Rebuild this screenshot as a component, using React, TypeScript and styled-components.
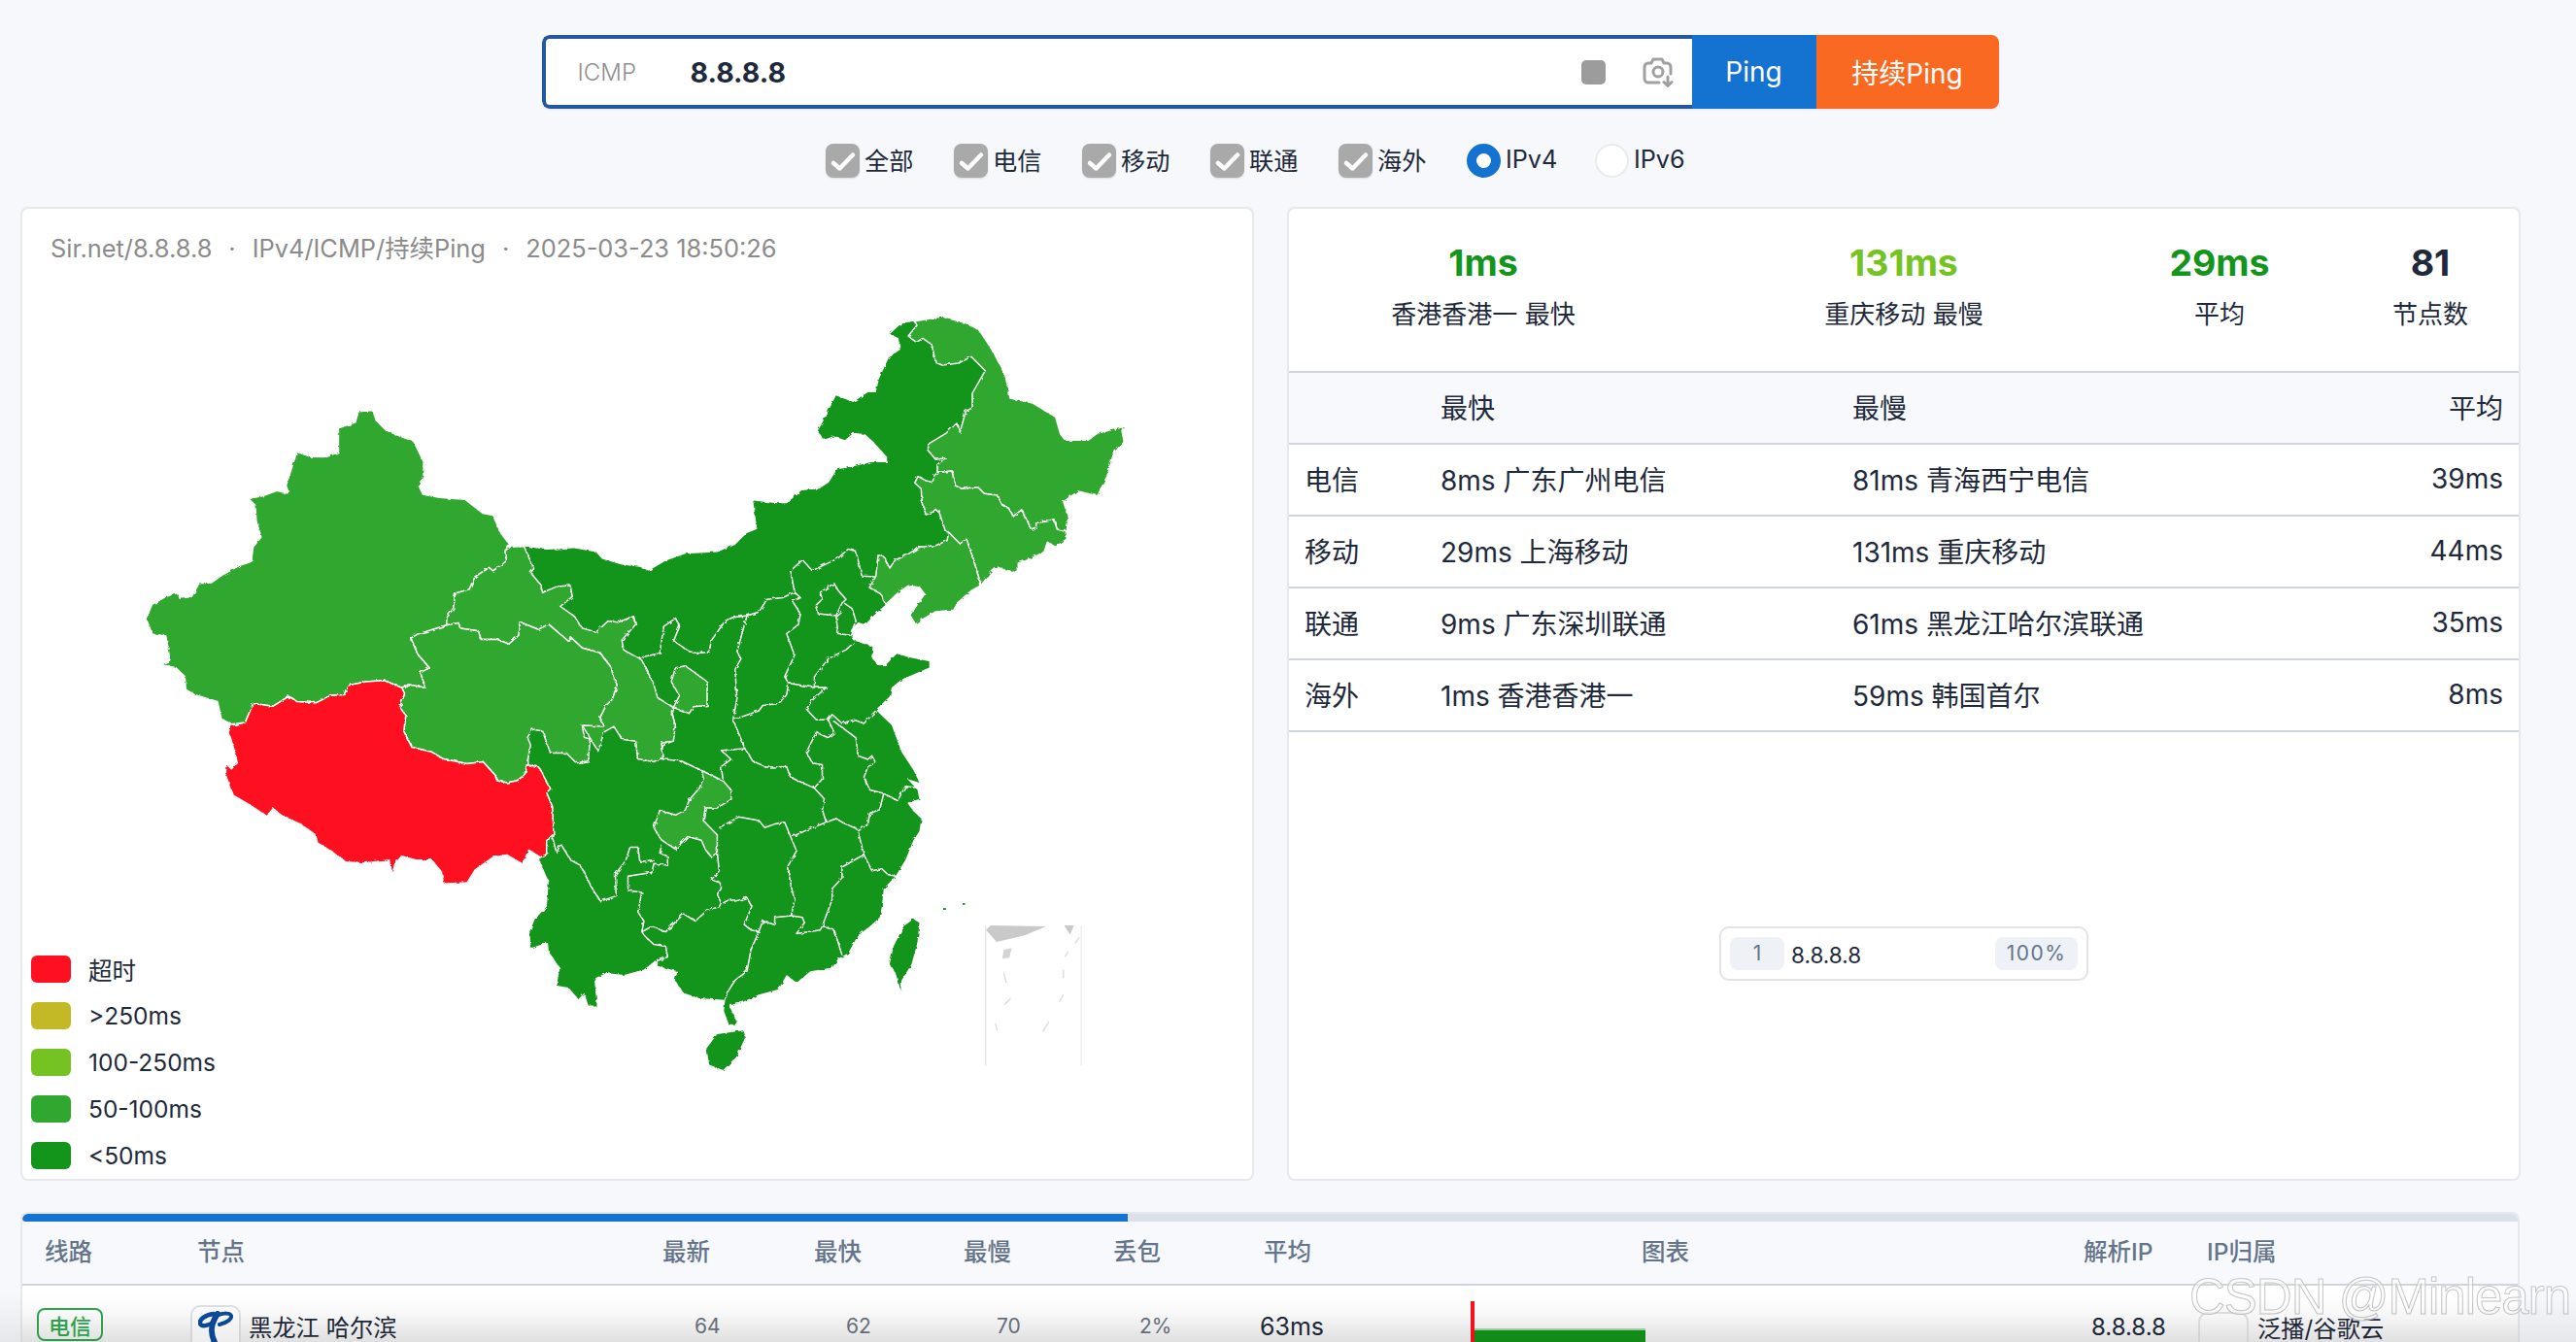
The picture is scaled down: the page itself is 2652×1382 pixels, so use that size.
import styled, { createGlobalStyle } from 'styled-components'

/*---> Map data, traced from the picture <---*/
const frames: Record<string, [number, number, number, number]> = {
  a: [0, 1.206, 200, 1.537],
  w: [130, 2.45, 300, 2.45],
  e: [520, 2.45, 560, 2.703],
  n: [800, 3, 300, 3],
}

const pts = (frame: string, list: number[]) => {
  const [ox, sx, oy, sy] = frames[frame]
  const out: string[] = []
  for (let i = 0; i < list.length; i += 2) {
    out.push(`${(ox + list[i] / sx).toFixed(1)},${(oy + list[i + 1] / sy).toFixed(1)}`)
  }
  return out.join(' ')
}

const mainland = [
  pts('w', [1003,643,1060,652,1130,648,1185,658,1200,675,1250,690,1295,695,1318,705,1360,680,1410,662,1490,658,1535,640,1565,610]),
  pts('a', [940,530,935,485]),
  pts('n', [0,655,30,655,75,615,130,610,160,590,185,550,215,545,290,528,340,528,340,512,295,462,270,440,235,438,210,460,175,448,145,458,125,432,140,405,182,322,235,342,280,312,305,312,315,270,345,205,380,180,375,145,348,132,385,98,425,92,640,170,680,300,650,400,600,800,400,880,335,968,300,1000,272,1030,250,1022,228,1048,235,1078,270,1090,295,1098,292,1130,310,1155,335,1155,370,1120,405,1130,470,1143]),
  pts('e', [1070,345,1000,378,975,400,970,425,935,462,975,505,1000,580,1030,630,1045,665,1015,655,1040,685,1045,710,1015,722,1030,745,1050,765,1045,800,1030,825,1010,880,985,925,955,960,950,1010,945,1040,920,1065,890,1090,865,1140,840,1155,825,1180,770,1190,735,1222,710,1200,690,1240,640,1255,600,1275,565,1285,582,1325,580,1340,565,1340,552,1300,555,1270,490,1265,450,1250,428,1215,435,1190,385,1175,385,1155,350,1185,300,1200,255,1195,225,1210,232,1285,210,1285,200,1250,185,1268,160,1235,130,1230,138,1180,110,1135,108,1110,65,1125,62,1080,75,1045,105,1010,110,940,90,890,60,610]),
].join(' ')

const xinjiang = pts('w', [585,303,622,300,630,325,655,350,690,365,725,378,750,430,750,465,738,490,748,512,790,520,855,525,900,560,925,565,945,610,968,640,955,655,960,680,925,705,915,697,880,720,865,752,830,762,825,800,808,825,808,842,735,865,718,875,735,915,765,950,742,962,755,1000,712,992,695,1000,650,982,605,985,558,995,550,1018,515,1020,480,1038,430,1035,410,1022,370,1047,320,1040,300,1088,265,1092,240,1080,230,1035,172,1018,150,1005,148,972,125,950,88,942,110,930,100,870,65,865,50,825,65,790,100,770,130,760,135,775,165,770,183,737,215,735,240,717,285,692,315,682,320,645,340,620,328,580,325,540,308,523,345,516,380,503,410,510,403,490,430,405,465,417,505,418,535,405,535,345,578,330])

const tibet = pts('w', [265,1095,300,1088,320,1040,370,1047,410,1022,430,1035,480,1038,515,1020,550,1018,558,995,605,985,650,982,695,1000,702,1015,690,1050,705,1070,700,1110,720,1150,770,1162,800,1180,860,1192,900,1187,930,1220,935,1235,960,1240,985,1235,1005,1220,1012,1195,1040,1200,1070,1255,1060,1265,1075,1300,1078,1375,1060,1385,1060,1420,1045,1428,1015,1410,1000,1445,960,1422,925,1428,880,1460,860,1492,800,1495,795,1465,770,1435,730,1435,695,1425,678,1445,670,1475,665,1435,600,1443,555,1440,520,1415,480,1390,475,1370,440,1345,395,1325,370,1305,355,1325,310,1295,270,1272,260,1245,248,1215,250,1190,265,1205,280,1190,270,1150,258,1110])

const qinghai = pts('w', [718,875,735,865,808,842,838,837,842,850,888,857,895,878,935,878,965,890,990,868,993,835,1040,853,1065,840,1118,885,1120,872,1150,900,1195,912,1220,945,1238,995,1225,1030,1210,1045,1195,1075,1203,1097,1150,1095,1155,1125,1170,1130,1165,1185,1135,1190,1110,1165,1070,1165,1050,1110,1025,1105,1012,1125,1020,1145,1010,1195,1005,1220,985,1235,960,1240,935,1235,930,1220,900,1187,860,1192,800,1180,770,1162,720,1150,700,1110,705,1070,690,1050,702,1015,695,1000,712,992,755,1000,742,962,765,950,735,915])

const gansu = pts('w', [1003,643,968,645,955,655,960,680,925,705,915,697,880,720,865,752,830,762,825,800,808,825,808,842,838,837,842,850,888,857,895,878,935,878,965,890,990,868,993,835,1040,853,1065,840,1118,885,1120,872,1150,900,1195,912,1220,945,1238,995,1225,1030,1210,1045,1195,1075,1203,1097,1150,1095,1190,1160,1205,1112,1230,1098,1250,1130,1285,1135,1290,1180,1330,1187,1355,1175,1350,1140,1380,1135,1385,1095,1375,1060,1380,1050,1420,1065,1430,1048,1465,1045,1465,985,1410,945,1385,950,1375,985,1395,1020,1380,1050,1340,1025,1330,990,1300,930,1255,905,1250,880,1285,840,1280,820,1240,835,1215,832,1185,860,1150,850,1130,820,1095,795,1125,770,1120,742,1085,745,1050,760,1045,740,1020,710,1028,700])

const chongqing = pts('e', [497,632,550,660,570,685,570,712,535,735,505,735,500,770,535,810,535,860,520,872,505,850,495,825,460,815,430,850,395,825,375,790,390,742,430,755,455,740,465,712,490,680,500,655])

const heilongjiang = pts('n', [425,92,510,78,590,100,625,120,670,190,705,260,720,330,790,345,860,388,875,440,890,460,960,460,990,438,1085,415,1065,430,1072,465,1040,500,1020,570,990,632,930,618,885,650,900,700,895,743,865,735,855,705,830,712,800,715,800,730,785,735,755,675,730,695,715,670,695,660,680,630,640,625,620,605,570,610,550,600,540,555,495,560,495,535,520,515,490,520,465,490,470,470,520,440,555,408,565,435,583,370,603,360,603,315,620,285,643,245,600,202,560,222,510,228,490,220,478,165,450,145,430,158,405,138,432,105])

const jilin = pts('n', [520,740,498,675,460,690,448,655,445,610,425,592,435,572,460,585,480,590,485,570,495,560,540,555,550,600,570,610,620,605,640,625,680,630,695,660,715,670,730,695,755,675,785,735,800,730,800,715,830,712,855,705,865,735,895,743,895,765,860,790,835,775,825,805,770,832,745,840,745,870,700,860,680,852,660,870,630,908,605,825,585,765,565,780,530,745])

const liaoning = pts('n', [305,880,312,815,330,820,348,855,365,830,400,815,440,790,490,785,525,770,530,745,565,780,585,765,605,825,630,908,600,925,560,960,545,985,490,990,440,1020,400,1048,428,1030,410,1000,455,935,440,915,405,910,370,935,335,968,320,935,285,915])

// borders between provinces that share the same colour
const borders = [
  [335,318,390,305,400,230,430,207,440,230,425,270,465,300,490,305,515,300,520,270,555,215,575,205,610,200,640,190,660,155,700,150,730,135,720,75,750,45,775,75,840,40,865,15,885,20,900,90,935,92],
  [730,135,745,150,725,160,745,195,740,225,710,250,730,310,705,370,715,388,780,400,810,400,775,435,760,460,785,490,815,490,825,475,850,500,880,490,905,500,935,465],
  [880,275,860,295,815,320,780,370,780,400],
  [830,110,795,135,800,155,785,170,790,195,835,200,850,165,860,155,840,130,830,110],
  [855,165,875,180,885,215,870,255,840,250,835,205,850,190],
  [610,200,585,300,595,320,580,350,585,430,575,490,640,465,650,450,690,445,710,420,715,388],
  [575,490,605,570,625,605,660,622,710,620,720,650,780,680,805,710,800,740,810,775],
  [605,570,545,575,570,600,545,620,550,660],
  [420,465,430,510,420,550,400,560,380,597,445,605,497,632],
  [780,680,800,655,800,615,775,610,760,580,785,525,815,540,830,525,815,490],
  [825,490,885,540,890,590,915,600,925,590,935,610,915,620,905,650,920,685,955,695,990,715,1010,675,1045,680],
  [955,695,945,740,920,750,915,780,890,800,905,865,925,910,950,905,965,920,985,925],
  [725,815,765,795,810,775,835,765,850,775,890,795],
  [540,790,590,760,640,770,655,790,680,780,705,775,720,815,735,855,712,900,725,970,730,990,722,1035],
  [905,865,850,900,850,930,825,960,825,990,800,1065,830,1075,850,1145],
  [722,1035,750,1040,755,1055,735,1085,795,1075,800,1065],
  [722,1035,680,1040,680,1060,650,1050,640,1080,620,1075,603,1060,622,1010,610,985,580,995,565,990,550,1000],
  [535,860,540,910,520,935,545,945,545,960,535,975,545,1000,540,1010,510,1020,480,1050,450,1030,405,1080,370,1065,345,1080,355,1095,375,1115,405,1120,410,1150,385,1160],
  [640,1080,620,1130,610,1190,580,1215,560,1250,555,1270],
  [345,1080,350,1050,335,1025,345,970,310,965,310,925,370,915,375,890,410,895,410,870,390,860,395,840],
  [375,880,340,885,335,845,315,845,305,880,278,920,280,980,240,995,220,960,190,895,165,880,140,835,130,860,120,820],
]

const taiwan = pts('e', [1030,1045,1045,1055,1040,1110,1025,1170,1000,1215,998,1243,985,1195,970,1170,980,1120,1005,1065])
const hainan = pts('e', [535,1365,600,1355,605,1375,585,1425,550,1465,515,1450,508,1405])

const seaDashes = [
  [1258,1195,1264,1222],
  [1408,1185,1408,1208],
  [1275,1265,1260,1282],
  [1408,1255,1397,1275],
  [1237,1335,1241,1355],
  [1372,1330,1356,1358],
  [1448,1095,1438,1112],
  [1420,1135,1412,1150],
]

const FAST = '#13941a'
const MID = '#30a830'

/*---> Page data <---*/
const filters = ['全部', '电信', '移动', '联通', '海外']

const stats = [
  { value: '1ms', label: '香港香港一 最快', color: FAST },
  { value: '131ms', label: '重庆移动 最慢', color: '#74c323' },
  { value: '29ms', label: '平均', color: FAST },
  { value: '81', label: '节点数', color: '#1e293b' },
]

const summary = [
  ['电信', '8ms 广东广州电信', '81ms 青海西宁电信', '39ms'],
  ['移动', '29ms 上海移动', '131ms 重庆移动', '44ms'],
  ['联通', '9ms 广东深圳联通', '61ms 黑龙江哈尔滨联通', '35ms'],
  ['海外', '1ms 香港香港一', '59ms 韩国首尔', '8ms'],
]

const legend = [
  ['超时', '#ff1020'],
  ['>250ms', '#c3b825'],
  ['100-250ms', '#74c323'],
  ['50-100ms', MID],
  ['<50ms', FAST],
]

const headers: [string, number][] = [
  ['线路', 10], ['节点', 9], ['最新', 0], ['最快', 2], ['最慢', 2], ['丢包', 0], ['平均', 6], ['图表', 178], ['解析IP', 0], ['IP归属', 11],
]

/*---> Component <---*/
export default function App() {
  return (
    <Shell>
      <GlobalStyle />
      <SearchBar>
        <SearchInput>
          <Protocol>ICMP</Protocol>
          <Target>8.8.8.8</Target>
          <StopMark />
          <svg width="33" height="32" viewBox="0 0 33 32" fill="none" stroke="#a0a0a0" strokeWidth="3" strokeLinecap="round" strokeLinejoin="round">
            <path d="M17 27H6a4 4 0 0 1-4-4V11a4 4 0 0 1 4-4h3l2-4h9l2 4h3a4 4 0 0 1 4 4v7" />
            <circle cx="16" cy="16" r="5" />
            <path d="M26 21v9M22 26.5l4 4 4-4" />
          </svg>
        </SearchInput>
        <ActionButton $bg="#1472d0">Ping</ActionButton>
        <ActionButton $bg="#f96922" $wide>持续Ping</ActionButton>
      </SearchBar>

      <FilterRow>
        {filters.map((name) => (
          <FilterItem key={name}>
            <CheckBox>
              <svg width="35" height="35" viewBox="0 0 35 35" fill="none" stroke="#fff" strokeWidth="4.5" strokeLinecap="round" strokeLinejoin="round">
                <path d="M8 20l6.5 5.5L28 11.5" />
              </svg>
            </CheckBox>
            <FilterLabel>{name}</FilterLabel>
          </FilterItem>
        ))}
        <FilterItem>
          <Radio $on />
          <FilterLabel>IPv4</FilterLabel>
        </FilterItem>
        <FilterItem>
          <Radio />
          <FilterLabel>IPv6</FilterLabel>
        </FilterItem>
      </FilterRow>

      <Panels>
        <Card>
          <MapTitle>
            Sir.net/8.8.8.8<Dot>·</Dot>IPv4/ICMP/持续Ping<Dot>·</Dot>2025-03-23 18:50:26
          </MapTitle>
          <MapDrawing viewBox="130 300 1060 820" width="1060" height="820">
            <defs>
              <filter id="rough" x="-2%" y="-2%" width="104%" height="104%" colorInterpolationFilters="sRGB">
                <feTurbulence type="fractalNoise" baseFrequency="0.2" numOctaves="3" seed="4" />
                <feDisplacementMap in="SourceGraphic" scale="3.5" />
              </filter>
            </defs>
            <g filter="url(#rough)" stroke="#fff" strokeWidth="1.5" strokeLinejoin="round">
              <polygon points={mainland} fill={FAST} stroke="none" />
              {borders.map((line, i) => (
                <polyline key={i} points={pts('e', line)} fill="none" />
              ))}
              <polygon points={xinjiang} fill={MID} />
              <polygon points={gansu} fill={MID} />
              <polygon points={qinghai} fill={MID} />
              <polygon points={chongqing} fill={MID} />
              <polygon points={heilongjiang} fill={MID} />
              <polygon points={jilin} fill={MID} />
              <polygon points={liaoning} fill={MID} />
              <polygon points={tibet} fill="#ff1020" />
              <polygon points={taiwan} fill={FAST} stroke="none" />
              <polygon points={hainan} fill={FAST} stroke="none" />
            </g>
            <polygon points={pts('e', [1105,1014,1112,1014,1112,1019,1105,1019])} fill={FAST} />
            <polygon points={pts('e', [1154,1000,1160,1000,1160,1005,1154,1005])} fill={FAST} />
            <polyline points={pts('e', [1212,1065,1212,1453])} stroke="#e6e6e6" strokeWidth="1.4" fill="none" />
            <polyline points={pts('e', [1453,1065,1453,1453])} stroke="#eeeeee" strokeWidth="1.4" fill="none" />
            <polygon points={pts('e', [1213,1075,1225,1062,1365,1065,1310,1090,1240,1108])} fill="#c9c9c9" />
            <polygon points={pts('e', [1410,1062,1435,1062,1425,1088])} fill="#c9c9c9" />
            <polygon points={pts('e', [1258,1130,1278,1125,1272,1152,1254,1155])} fill="#d4d4d4" />
            {seaDashes.map((d, i) => (
              <polyline key={i} points={pts('e', d)} stroke="#dcdcdc" strokeWidth="1.4" fill="none" />
            ))}
          </MapDrawing>
          <Legend>
            {legend.map(([label, color]) => (
              <LegendRow key={label}>
                <Swatch $color={color} />
                {label}
              </LegendRow>
            ))}
          </Legend>
        </Card>

        <SummaryCard>
          <StatsRow>
            {stats.map((s) => (
              <Stat key={s.label}>
                <StatValue $color={s.color}>{s.value}</StatValue>
                <StatLabel>{s.label}</StatLabel>
              </Stat>
            ))}
          </StatsRow>
          <SummaryRow $head>
            <span />
            <span>最快</span>
            <span>最慢</span>
            <AvgCell>平均</AvgCell>
          </SummaryRow>
          {summary.map((row) => (
            <SummaryRow key={row[0]}>
              <span>{row[0]}</span>
              <span>{row[1]}</span>
              <span>{row[2]}</span>
              <AvgCell>{row[3]}</AvgCell>
            </SummaryRow>
          ))}
          <NodeArea>
            <NodeChip>
              <ChipCount>1</ChipCount>
              <ChipAddress>8.8.8.8</ChipAddress>
              <ChipShare>100%</ChipShare>
            </NodeChip>
          </NodeArea>
        </SummaryCard>
      </Panels>

      <ResultCard>
        <Progress>
          <ProgressFill style={{ width: `${(1139 / 2571) * 100}%` }} />
        </Progress>
        <ResultHead>
          {headers.map(([name, pad]) => (
            <HeadCell key={name} $pad={pad}>{name}</HeadCell>
          ))}
        </ResultHead>
        <ResultRow>
          <span><LineBadge>电信</LineBadge></span>
          <NodeCell>
            <LogoBox>
              <svg width="36" height="42" viewBox="0 0 36 42" fill="none" stroke="#0b4b9e" strokeLinecap="round">
                <path d="M16 3C7 4 1 9 2 13c1.500 4 8 2 14-1" strokeWidth="4.5" />
                <path d="M21 4c6-2 12-2 13 1 1 3-4 7-12 9" strokeWidth="4" />
                <path d="M20 3c-7 10-9 20-1 33" strokeWidth="6" />
              </svg>
            </LogoBox>
            <NodeName>黑龙江 哈尔滨</NodeName>
          </NodeCell>
          <Metric $pad={31}>64</Metric>
          <Metric $pad={33}>62</Metric>
          <Metric $pad={34}>70</Metric>
          <Metric $pad={25}>2%</Metric>
          <AvgValue>63ms</AvgValue>
          <ChartCell>
            <RedTick />
            <GreenBar />
          </ChartCell>
          <IpValue>8.8.8.8</IpValue>
          <OwnerCell>
            <OwnerIcon />
            <OwnerName>泛播/谷歌云</OwnerName>
          </OwnerCell>
        </ResultRow>
      </ResultCard>

      <Watermark>CSDN @Minlearn</Watermark>
    </Shell>
  )
}

/*---> Styles <---*/
const GlobalStyle = createGlobalStyle`
  html, body {
    margin: 0;
    background: #f6f8fc;
  }
  * {
    box-sizing: border-box;
  }
`

const Shell = styled.div`
  position: relative;
  height: 1382px;
  overflow: hidden;
  padding: 36px 58px 0 21px;
  background: #f6f8fc;
  color: #1e293b;
  font-family: Inter, 'Noto Sans CJK SC', sans-serif;

  &::after {
    content: '';
    position: absolute;
    left: 0;
    right: 0;
    bottom: 0;
    height: 50px;
    background: linear-gradient(rgba(0, 0, 0, 0), rgba(0, 0, 0, 0.07));
    pointer-events: none;
  }
`

const SearchBar = styled.div`
  display: flex;
  width: 1500px;
  height: 76px;
  margin: 0 auto;
  border-radius: 8px;
  overflow: hidden;
  box-shadow: 0 1px 3px rgba(0, 0, 0, 0.08);
`

const SearchInput = styled.div`
  flex: 1;
  display: flex;
  align-items: center;
  padding: 0 18px 0 33px;
  background: #fff;
  border: 4px solid #23589f;
  border-right: none;
  border-radius: 8px 0 0 8px;
`

const Protocol = styled.span`
  width: 116px;
  font-size: 24px;
  font-weight: 300;
  color: #8f8f8f;
`

const Target = styled.span`
  flex: 1;
  font-size: 28.5px;
  font-weight: 700;
  color: #1e293b;
`

const StopMark = styled.span`
  width: 25px;
  height: 25px;
  margin-right: 38px;
  border-radius: 5px;
  background: #9c9c9c;
`

const ActionButton = styled.div<{ $bg: string; $wide?: boolean }>`
  display: flex;
  align-items: center;
  justify-content: center;
  width: ${(p) => (p.$wide ? 188 : 128)}px;
  background: ${(p) => p.$bg};
  color: #fff;
  font-size: 28px;
`

const FilterRow = styled.div`
  display: flex;
  height: 35px;
  margin-top: 36px;
  padding-left: 829px;
`

const FilterItem = styled.div`
  display: flex;
  align-items: center;
  gap: 5px;
  width: 132px;
  font-size: 25.2px;
  color: #1e293b;
`

const FilterLabel = styled.span`
  margin-top: -3px;
`

const CheckBox = styled.span`
  display: block;
  width: 35px;
  height: 35px;
  border-radius: 8px;
  background: #a9a9a9;
  box-shadow: 0 1px 2px rgba(0, 0, 0, 0.12);

  svg {
    display: block;
  }
`

const Radio = styled.span<{ $on?: boolean }>`
  width: 35px;
  height: 35px;
  border-radius: 50%;
  background: #fff;
  border: ${(p) => (p.$on ? '10px solid #1472d0' : '2px solid #e8eaee')};
`

const Panels = styled.div`
  display: grid;
  grid-template-columns: 1270px 1270px;
  gap: 34px;
  height: 1003px;
  margin-top: 30px;
`

const Card = styled.div`
  position: relative;
  overflow: hidden;
  background: #fff;
  border: 2px solid #e6e8ee;
  border-radius: 8px;
`

const SummaryCard = styled(Card)`
  display: flex;
  flex-direction: column;
`

const MapTitle = styled.div`
  padding: 26px 0 0 29px;
  font-size: 25.4px;
  line-height: 30px;
  color: #8b8b8b;
  white-space: nowrap;
`

const Dot = styled.span`
  padding: 0 17px;
`

const MapDrawing = styled.svg`
  display: block;
  margin: 29px 0 0 107px;
`

const Legend = styled.div`
  position: absolute;
  left: 9px;
  bottom: 10px;
  display: flex;
  flex-direction: column;
  gap: 20px;
`

const LegendRow = styled.div`
  display: flex;
  align-items: center;
  gap: 18px;
  height: 28px;
  font-size: 24.5px;
`

const Swatch = styled.span<{ $color: string }>`
  width: 41px;
  height: 28px;
  border-radius: 6px;
  background: ${(p) => p.$color};
`

const StatsRow = styled.div`
  display: grid;
  grid-template-columns: 400px 466px 184px 1fr;
  flex: 0 0 169px;
  padding-top: 31px;
  border-bottom: 2px solid #d0d5dd;
`

const Stat = styled.div`
  display: flex;
  flex-direction: column;
  align-items: center;

  &:last-child {
    padding-left: 34px;
  }
`

const StatValue = styled.div<{ $color: string }>`
  font-size: 37.5px;
  line-height: 50px;
  font-weight: 700;
  color: ${(p) => p.$color};
`

const StatLabel = styled.div`
  margin-top: 3px;
  font-size: 26px;
  line-height: 50px;
`

const SummaryRow = styled.div<{ $head?: boolean }>`
  display: grid;
  grid-template-columns: 140px 424px 1fr 120px;
  align-items: center;
  flex: 0 0 74px;
  padding: 0 16px 3px 16px;
  border-bottom: 2px solid #d0d5dd;
  background: ${(p) => (p.$head ? '#f7f9fc' : '#fff')};
  font-size: 28px;
`

const AvgCell = styled.span`
  text-align: right;
`

const NodeArea = styled.div`
  flex: 1;
  display: flex;
  align-items: center;
  justify-content: center;
  padding-bottom: 5px;
`

const NodeChip = styled.div`
  display: flex;
  align-items: center;
  width: 380px;
  height: 56px;
  padding: 0 9px;
  border: 2px solid #e2e4e6;
  border-radius: 10px;
`

const ChipCount = styled.span`
  display: flex;
  align-items: center;
  justify-content: center;
  width: 56px;
  height: 34px;
  border-radius: 8px;
  background: #eef2f6;
  color: #64748b;
  font-size: 21px;
`

const ChipAddress = styled.span`
  flex: 1;
  margin: 3px 0 0 7px;
  font-size: 22.5px;
`

const ChipShare = styled(ChipCount)`
  width: 85px;
  letter-spacing: 1.5px;
`

const ResultCard = styled.div`
  margin-top: 32px;
  border: 2px solid #e6e8ee;
  border-bottom: none;
  border-radius: 8px 8px 0 0;
  overflow: hidden;
  background: #fff;
`

const Progress = styled.div`
  height: 8px;
  background: #dce0e8;
`

const ProgressFill = styled.div`
  height: 100%;
  background: #1472d0;
  border-radius: 4px 0 0 4px;
`

const resultColumns = '158px 488px 154px 154px 156px 149px 217px 633px 116px 1fr'

const ResultHead = styled.div`
  display: grid;
  grid-template-columns: ${resultColumns};
  align-items: center;
  height: 66px;
  padding: 0 0 5px 13px;
  background: #f7f9fc;
  border-bottom: 2px solid #d0d5dd;
`

const HeadCell = styled.span<{ $pad: number }>`
  padding-left: ${(p) => p.$pad}px;
  font-size: 24.5px;
  font-weight: 500;
  color: #64748b;
`

const ResultRow = styled.div`
  display: grid;
  grid-template-columns: ${resultColumns};
  height: 90px;
  padding-left: 15px;
  background: linear-gradient(#fff 30px, #f1f1f1 58px);
`

const LineBadge = styled.span`
  display: inline-flex;
  align-items: center;
  justify-content: center;
  width: 68px;
  height: 34px;
  margin-top: 23px;
  border: 2px solid #30a84f;
  border-radius: 8px;
  color: #30a84f;
  font-size: 22px;
  font-weight: 500;
`

const NodeCell = styled.div`
  display: flex;
  align-items: flex-start;
  gap: 8px;
  padding-top: 20px;
`

const LogoBox = styled.span`
  display: flex;
  justify-content: center;
  width: 52px;
  height: 60px;
  padding-top: 4px;
  border: 2px solid #e0e2e6;
  border-radius: 10px;
  background: #fff;
`

const NodeName = styled.span`
  margin-top: 6px;
  font-size: 24.3px;
  line-height: 34px;
  white-space: nowrap;
`

const Metric = styled.span<{ $pad: number }>`
  padding: 28px 0 0 ${(p) => p.$pad}px;
  font-size: 21px;
  line-height: 28px;
  color: #6b7280;
`

const AvgValue = styled.span`
  padding-top: 27px;
  font-size: 25px;
  line-height: 30px;
`

const ChartCell = styled.div`
  position: relative;
  display: flex;
  padding-top: 16px;
`

const RedTick = styled.span`
  width: 4px;
  height: 50px;
  background: #ff1020;
`

const GreenBar = styled.span`
  width: 176px;
  height: 14px;
  margin-top: 28px;
  border-top: 2px solid #a6d6a8;
  background: ${FAST};
`

const IpValue = styled(AvgValue)`
  padding-left: 6px;
  padding-top: 28px;
  font-size: 24px;
`

const OwnerCell = styled.div`
  display: flex;
  align-items: flex-start;
  gap: 9px;
  padding-top: 27px;
`

const OwnerIcon = styled.span`
  flex: none;
  width: 52px;
  height: 60px;
  border: 2px solid #e0e2e6;
  border-radius: 10px;
`

const OwnerName = styled.span`
  font-size: 24.3px;
  line-height: 34px;
  white-space: nowrap;
`

const Watermark = styled.div`
  position: absolute;
  left: 2254px;
  top: 1306px;
  font-family: 'Liberation Sans', sans-serif;
  font-size: 51px;
  line-height: 60px;
  letter-spacing: -1px;
  white-space: nowrap;
  color: rgba(255, 255, 255, 0.5);
  -webkit-text-stroke: 1px #c6c6c6;
`
